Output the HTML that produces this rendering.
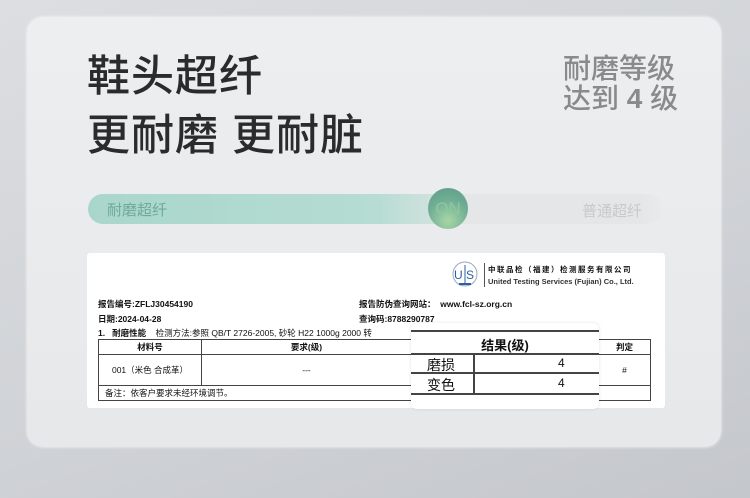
<!DOCTYPE html>
<html><head><meta charset="utf-8"><style>
*{margin:0;padding:0;box-sizing:border-box}
body{width:750px;height:498px;overflow:hidden;background:linear-gradient(160deg,#dcdee1 0%,#cfd2d6 60%,#c4c7cc 100%);font-family:"Liberation Sans","Noto Sans CJK SC",sans-serif;position:relative}
.a{position:absolute}
.card{left:27px;top:17px;width:694px;height:430px;border-radius:16px;background:linear-gradient(180deg,#eceef0,#e6e8ea);box-shadow:0 0 3px rgba(255,255,255,.8)}
.t{color:#2b2b2b;font-size:43px;font-weight:500;letter-spacing:1px;line-height:58px}
.r{color:#8a8a8a;font-size:28px;line-height:30px;font-weight:500}
.tg{left:88px;top:194px;width:574px;height:30px;border-radius:15px;background:linear-gradient(90deg,#a9d6cb 0%,#b6dcd3 50%,#d5e3df 62%,#e5e6e7 66%,#e5e6e7 96%,#e9eaeb 100%)}
.knob{left:428px;top:188px;width:40px;height:41px;border-radius:50%;background:radial-gradient(circle at 50% 80%,#a7d6a6,#6fae94 55%,#5d9b88);color:#8dc7a0;font-size:17px;text-align:center;line-height:41px;font-family:"Liberation Sans",sans-serif}
.doc{left:87px;top:253px;width:578px;height:155px;background:#fff;border-radius:3px}
.s{font-size:8.5px;color:#111;white-space:nowrap}
.b{font-weight:bold}
table{border-collapse:collapse}
td{border:1px solid #444;font-size:8.5px;text-align:center;color:#111}
.pop{left:411px;top:323px;width:188px;height:86px;background:#fff;border-radius:6px;box-shadow:0 0 3px rgba(0,0,0,.12)}
.ln{position:absolute;left:0;width:188px;height:1.5px;background:#444}
</style></head><body>
<div class="a card"></div>
<div class="a t" style="left:87px;top:48px">鞋头超纤</div>
<div class="a t" style="left:87px;top:107px">更耐磨 更耐脏</div>
<div class="a r" style="left:563px;top:54px">耐磨等级</div>
<div class="a r" style="left:563px;top:84px">达到<span style="font-family:'Liberation Sans';font-weight:bold"> 4 </span>级</div>
<div class="a tg"></div>
<div class="a" style="left:107px;top:199px;font-size:15px;color:#6fa999">耐磨超纤</div>
<div class="a" style="left:582px;top:200px;font-size:15px;color:#c8c9ca">普通超纤</div>
<div class="a knob">ON</div>
<div class="a doc"></div>
<svg class="a" style="left:451px;top:260px" width="30" height="32" viewBox="0 0 30 32"><circle cx="14" cy="14" r="12" fill="none" stroke="#9ab" stroke-width="1"/><text x="3" y="19" font-size="12" fill="#2a5ea8" font-family="Liberation Sans">U</text><text x="15" y="19" font-size="12" fill="#2a5ea8" font-family="Liberation Sans">S</text><line x1="14" y1="5" x2="14" y2="24" stroke="#2a5ea8"/><rect x="8" y="23" width="12" height="2" fill="#2a5ea8"/></svg>
<div class="a" style="left:484px;top:263px;width:1px;height:24px;background:#555"></div>
<div class="a s b" style="left:488px;top:264px;font-size:7.5px;letter-spacing:1.5px">中联品检（福建）检测服务有限公司</div>
<div class="a s b" style="left:488px;top:277px;font-size:7.5px;color:#333">United Testing Services (Fujian) Co., Ltd.</div>
<div class="a s b" style="left:98px;top:298px">报告编号:ZFLJ30454190</div>
<div class="a s b" style="left:98px;top:313px">日期:2024-04-28</div>
<div class="a s b" style="left:359px;top:298px">报告防伪查询网站：&nbsp; www.fcl-sz.org.cn</div>
<div class="a s b" style="left:359px;top:313px">查询码:8788290787</div>
<div class="a s" style="left:98px;top:327px"><b>1. &nbsp;&nbsp;耐磨性能</b> &nbsp;&nbsp; 检测方法:参照 QB/T 2726-2005, 砂轮 H22 1000g 2000 转</div>
<table class="a" style="left:98px;top:339px;width:553px">
<tr style="height:15px"><td class="b" style="width:103px">材料号</td><td class="b" style="width:210px">要求(级)</td><td style="width:187px"></td><td class="b">判定</td></tr>
<tr style="height:31px"><td>001（米色 合成革）</td><td>---</td><td></td><td>#</td></tr>
<tr style="height:15px"><td colspan="4" style="text-align:left;padding-left:6px">备注：依客户要求未经环境调节。</td></tr>
</table>
<div class="a pop">
<div class="ln" style="top:7px"></div>
<div class="a" style="left:0;width:188px;top:12px;text-align:center;font-size:13px;font-weight:bold;color:#111">结果(级)</div>
<div class="ln" style="top:30px"></div>
<div class="ln" style="top:49px"></div>
<div class="ln" style="top:70px"></div>
<div class="a" style="left:62px;top:30px;width:1.5px;height:41px;background:#444"></div>
<div class="a" style="left:16px;top:32px;font-size:14px;color:#111">磨损</div>
<div class="a" style="left:16px;top:52px;font-size:14px;color:#111">变色</div>
<div class="a" style="left:147px;top:33px;font-size:12px;color:#111">4</div>
<div class="a" style="left:147px;top:53px;font-size:12px;color:#111">4</div>
</div>
</body></html>
